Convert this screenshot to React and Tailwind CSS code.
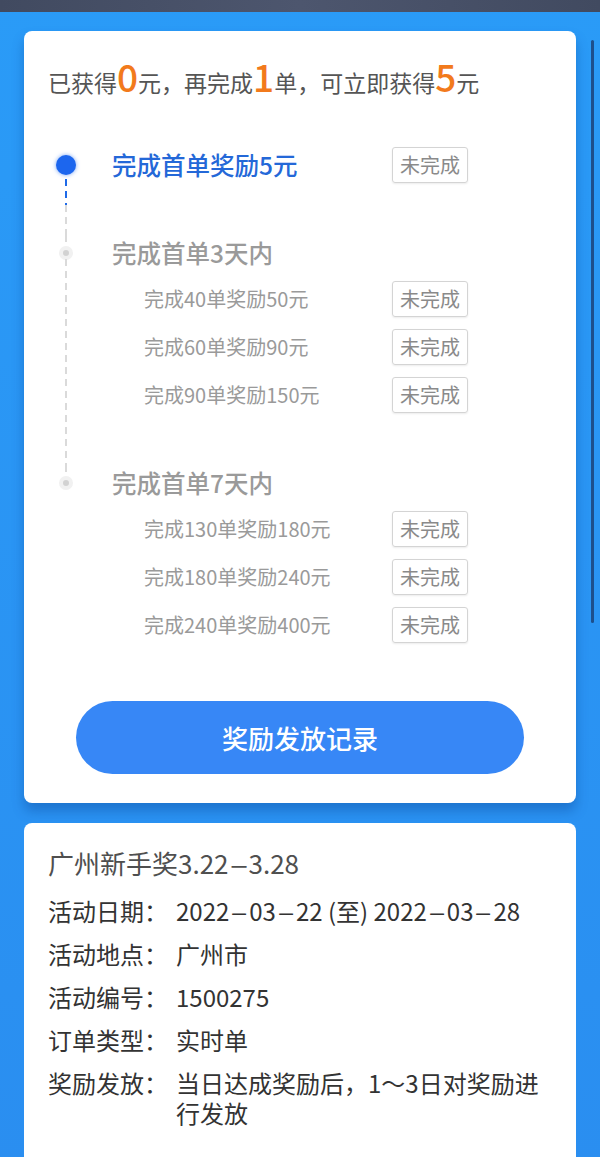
import React from "react";

const FONT = { fontFamily: '"Noto Sans CJK SC", "Noto Sans", sans-serif' };

const groups = [
  {
    title: "完成首单3天内",
    items: ["完成40单奖励50元", "完成60单奖励90元", "完成90单奖励150元"],
  },
  {
    title: "完成首单7天内",
    items: ["完成130单奖励180元", "完成180单奖励240元", "完成240单奖励400元"],
  },
];

const Badge = () => (
  <span className="flex h-[36px] w-[76px] items-center justify-center rounded-[3px] border border-[#d4d4d4] text-[20px] text-[#8a8a8a] shadow-[0_1px_2px_rgba(0,0,0,0.08)]">
    未完成
  </span>
);

// wide dash used in dates
const Hy = () => <span className="inline-block w-[20px] scale-x-[1.3] text-center">–</span>;

// dashed connector
const Dash = ({ color = "gray", className = "" }) => (
  <div
    className={
      "w-[2px] " +
      (color === "blue"
        ? "bg-[repeating-linear-gradient(to_bottom,#1f6ae8_0_7px,transparent_7px_12px)] "
        : "bg-[repeating-linear-gradient(to_bottom,#dadada_0_7px,transparent_7px_12px)] ") +
      className
    }
  />
);

const Info = ({ label, children }) => (
  <div className="flex leading-[30px]">
    <span className="w-[128px] shrink-0">{label}</span>
    <span className="flex-1">{children}</span>
  </div>
);

export default function App() {
  return (
    <div className="relative min-h-screen bg-[linear-gradient(to_bottom,#2a9bf7,#2a8ef0)]" style={FONT}>
      <div className="h-[12px] bg-[linear-gradient(to_right,#414a60,#4d566e,#414a60)]" />

      {/* scrollbar */}
      <div className="absolute left-[591px] top-[40px] h-[583px] w-[3px] rounded-full bg-[#1d4f8c]" />

      <div className="px-6 pt-[19px]">
        {/* progress card */}
        <div className="rounded-lg bg-white pb-[29px] pt-[27px] shadow-[0_8px_12px_rgba(10,60,140,0.35)]">
          <p className="px-6 text-[23px] leading-[36px] text-[#555]">
            已获得<span className="text-[37px] font-medium text-[#f27a1c]">0</span>元，再完成
            <span className="text-[37px] font-medium text-[#f27a1c]">1</span>单，可立即获得
            <span className="text-[37px] font-medium text-[#f27a1c]">5</span>元
          </p>

          <div className="mt-[47px]">
            {/* first order */}
            <div className="flex">
              <div className="flex w-[84px] flex-col items-center">
                <div className="h-[8px]" />
                <div className="h-[20px] w-[20px] rounded-full bg-[#1c66ee] shadow-[0_0_4px_rgba(28,102,238,0.6)]" />
                <Dash color="blue" className="mt-[4px] h-[26px]" />
                <Dash className="flex-1" />
              </div>
              <div className="flex-1 pb-[52px] pl-[4px] pr-[108px]">
                <div className="flex h-[36px] items-center justify-between">
                  <span className="text-[24.5px] font-medium text-[#2468d8]">完成首单奖励5元</span>
                  <Badge />
                </div>
              </div>
            </div>

            {groups.map((g, gi) => {
              const last = gi === groups.length - 1;
              return (
                <div key={g.title} className="flex">
                  <div className="flex w-[84px] flex-col items-center">
                    <Dash className="h-[15px]" />
                    <div className="h-[6px] w-[6px] rounded-full bg-[#d2d2d2] ring-[4px] ring-[#f1f1f1]" />
                    {!last && <Dash className="mt-[3px] flex-1" />}
                  </div>
                  <div className={"flex-1 pl-[4px] pr-[108px] " + (last ? "" : "pb-[52px]")}>
                    <div className="flex h-[36px] items-center text-[24.5px] font-medium text-[#9a9a9a]">
                      {g.title}
                    </div>
                    <div className="mt-[10px] flex flex-col gap-[12px]">
                      {g.items.map((it) => (
                        <div key={it} className="flex h-[36px] items-center justify-between pl-[32px]">
                          <span className="text-[20px] text-[#9a9a9a]">{it}</span>
                          <Badge />
                        </div>
                      ))}
                    </div>
                  </div>
                </div>
              );
            })}
          </div>

          <button className="mx-auto mt-[58px] flex h-[73px] w-[448px] items-center justify-center rounded-full bg-[#3787f6] text-[26px] font-medium text-white">
            奖励发放记录
          </button>
        </div>

        {/* activity info */}
        <div className="mt-[20px] rounded-t-lg bg-white px-6 pb-10 pt-[25px] text-[24px] text-[#333]">
          <h2 className="text-[26px] leading-[30px] text-[#4f4f4f]">
            广州新手奖3.22<Hy />3.28
          </h2>
          <div className="mt-[18px] flex flex-col gap-[13px]">
            <Info label="活动日期：">
              2022<Hy />03<Hy />22 (至) 2022<Hy />03<Hy />28
            </Info>
            <Info label="活动地点：">广州市</Info>
            <Info label="活动编号：">1500275</Info>
            <Info label="订单类型：">实时单</Info>
            <Info label="奖励发放：">当日达成奖励后，1～3日对奖励进行发放</Info>
          </div>
        </div>
      </div>
    </div>
  );
}
